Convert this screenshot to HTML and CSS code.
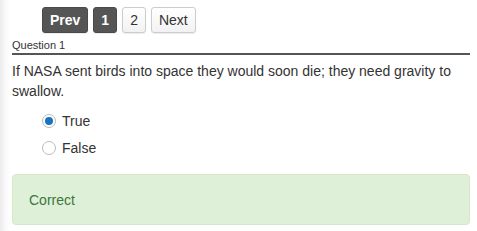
FILE: index.html
```html
<!DOCTYPE html>
<html lang="en">
<head>
    <meta charset="UTF-8">
    <meta name="viewport" content="width=device-width, initial-scale=1.0">
    <title>Quiz</title>
    <link rel="stylesheet" href="styles.css">
</head>
<body>
    <div class="quiz">
        <div class="pager">
            <span class="btn dark">Prev</span>
            <span class="btn dark">1</span>
            <span class="btn">2</span>
            <span class="btn">Next</span>
        </div>

        <div class="title">Question 1</div>

        <p class="question">If NASA sent birds into space they would soon die; they need gravity to swallow.</p>

        <ul class="answers">
            <li><span class="radio checked"></span>True</li>
            <li><span class="radio"></span>False</li>
        </ul>

        <div class="alert">Correct</div>
    </div>
</body>
</html>
```

FILE: styles.css
```css
* {
    padding: 0;
    margin: 0;
    box-sizing: border-box;
}

body {
    font-family: "Liberation Sans", Arial, sans-serif;
    font-size: 14px;
    color: #333;
    background: linear-gradient(to right, #ececec 0, #fafafa 6px, #fff 11px);
    height: 231px;
}

.quiz {
    padding: 7px 7px 0 12px;
}

.pager {
    display: flex;
    gap: 5px;
    padding-left: 30px;
}

.btn {
    height: 26px;
    line-height: 24px;
    padding: 0 7px;
    border: 1px solid #ccc;
    border-radius: 3px;
    background: linear-gradient(#fff, #f2f2f2);
    box-shadow: 0 1px 1px rgba(0, 0, 0, 0.08);
    font-size: 14px;
    color: #333;
}

.btn.dark {
    background: #555;
    border-color: #4a4a4a;
    color: #fff;
    font-weight: bold;
}

.title {
    margin-top: 6px;
    font-size: 11px;
    line-height: 13px;
    padding-bottom: 1px;
    border-bottom: 2px solid #555;
}

.question {
    margin-top: 6px;
    line-height: 20px;
}

.answers {
    list-style: none;
    margin: 6px 0 0 30px;
}

.answers li {
    display: flex;
    align-items: center;
    height: 27px;
}

.radio {
    width: 14px;
    height: 14px;
    border: 1px solid #bbb;
    border-radius: 50%;
    margin-right: 6px;
    background: #fff;
    position: relative;
}

.radio.checked::after {
    content: "";
    position: absolute;
    left: 2px;
    top: 2px;
    width: 8px;
    height: 8px;
    border-radius: 50%;
    background: #1a73c0;
}

.alert {
    margin-top: 13px;
    height: 51px;
    padding: 15px 16px;
    line-height: 20px;
    background: #dff0d8;
    border: 1px solid #d6e9c6;
    border-radius: 4px;
    color: #3c763d;
}
```
